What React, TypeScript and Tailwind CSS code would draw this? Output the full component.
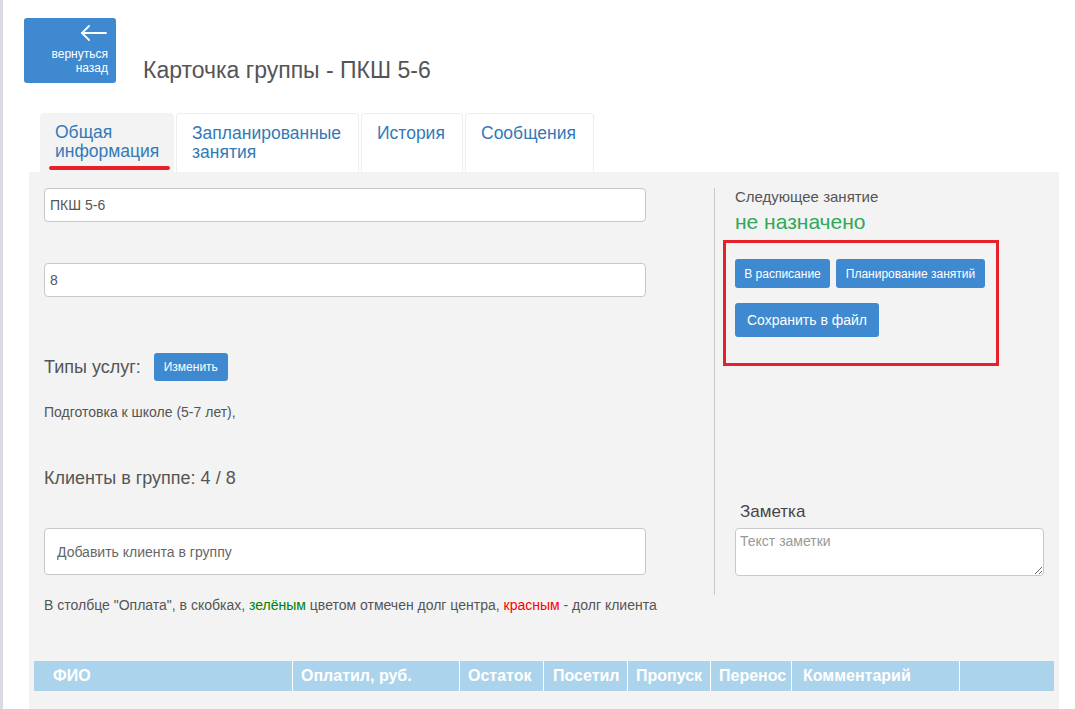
import React from 'react';

const TABS = [
  { label: ['Общая', 'информация'], w: 'w-[134px]', active: true },
  { label: ['Запланированные', 'занятия'], w: 'w-[183px]', active: false },
  { label: ['История'], w: 'w-[102px]', active: false },
  { label: ['Сообщения'], w: 'w-[129px]', active: false },
];

const COLUMNS = [
  { title: 'ФИО', w: 'w-[259px]', pl: 'pl-[19px]' },
  { title: 'Оплатил, руб.', w: 'w-[167px]', pl: 'pl-[8px]' },
  { title: 'Остаток', w: 'w-[84px]', pl: 'pl-[8px]' },
  { title: 'Посетил', w: 'w-[84px]', pl: 'pl-[9px]' },
  { title: 'Пропуск', w: 'w-[83px]', pl: 'pl-[8px]' },
  { title: 'Перенос', w: 'w-[81px]', pl: 'pl-[8px]' },
  { title: 'Комментарий', w: 'w-[168px]', pl: 'pl-[11px]' },
  { title: '', w: 'w-[94px]', pl: 'pl-[8px]' },
];

export default function App() {
  return (
    <div
      className="flex min-h-[709px] w-[1075px] bg-white text-[#555]"
      style={{ fontFamily: '"Liberation Sans", Arial, sans-serif' }}
    >
      {/* left strip */}
      <div className="w-[3px] shrink-0 bg-[#d9dae2]" />

      <div className="flex-1">
        {/* Header */}
        <div className="flex items-end pl-[21px] pt-[18px]">
          <button className="flex h-[65px] w-[92px] flex-col items-end rounded-[3px] bg-[#3e89d0] pr-[8px] pt-[7px] text-white">
            <svg width="28" height="16" viewBox="0 0 28 16" fill="none" stroke="white" strokeWidth="1.8" strokeLinecap="round">
              <path d="M2 8 H26" />
              <path d="M9 1 L2 8 L9 15" />
            </svg>
            <span className="mt-[6px] text-right text-[12px] leading-[14px]">
              вернуться
              <br />
              назад
            </span>
          </button>
          <h1 className="ml-[27px] text-[23px] leading-[26px] text-[#555]">Карточка группы - ПКШ 5-6</h1>
        </div>

        {/* Tabs */}
        <div className="mt-[30px] flex gap-[2px] pl-[37px]">
          {TABS.map((t, i) => (
            <div
              key={i}
              className={`relative h-[59px] ${t.w} rounded-t-[4px] px-[15px] pt-[10px] text-[17.5px] leading-[19px] text-[#337ab7] ${
                t.active ? 'bg-[#f3f3f3]' : 'border border-b-0 border-[#eee] bg-white'
              }`}
            >
              {t.label.map((l, j) => (
                <div key={j}>{l}</div>
              ))}
              {t.active && (
                <div className="absolute bottom-[2px] left-[9px] h-[4px] w-[121px] rounded-full bg-[#e8202a]" />
              )}
            </div>
          ))}
        </div>

        {/* Panel */}
        <div className="ml-[26px] w-[1030px] bg-[#f3f3f3] pb-[20px]">
          <div className="flex pl-[15px] pt-[16px]">
            {/* left column */}
            <div className="w-[602px]">
              <input
                readOnly
                value="ПКШ 5-6"
                className="h-[34px] w-full rounded-[4px] border border-[#c6c8cc] bg-white px-[5px] text-[14px] text-[#555] outline-none"
              />
              <input
                readOnly
                value="8"
                className="mt-[41px] h-[34px] w-full rounded-[4px] border border-[#c6c8cc] bg-white px-[5px] text-[14px] text-[#555] outline-none"
              />
              <div className="mt-[56px] flex h-[28px] items-center">
                <span className="text-[18px] leading-[24px] text-[#555]">Типы услуг:</span>
                <button className="ml-[13px] h-[28px] w-[74px] rounded-[3px] bg-[#3e89d0] text-[12px] text-white">
                  Изменить
                </button>
              </div>
              <div className="mt-[22px] text-[14px] leading-[18px]">Подготовка к школе (5-7 лет),</div>
              <div className="mt-[45px] text-[18px] leading-[24px]">Клиенты в группе: 4 / 8</div>
              <input
                readOnly
                placeholder="Добавить клиента в группу"
                className="mt-[38px] h-[47px] w-full rounded-[4px] border border-[#c6c8cc] bg-white px-[12px] text-[14px] text-[#555] outline-none placeholder:text-[#666]"
              />
              <div className="mt-[21px] whitespace-nowrap text-[14px] leading-[18px]">
                В столбце "Оплата", в скобках, <span className="text-[#008000]">зелёным</span> цветом отмечен долг центра,{' '}
                <span className="text-[#ff0000]">красным</span> - долг клиента
              </div>
            </div>

            {/* right column */}
            <div className="ml-[68px] h-[407px] w-[330px] border-l border-[#c8c8c8] pl-[8px]">
              <div className="ml-[12px] text-[15px] leading-[18px]">Следующее занятие</div>
              <div className="ml-[12px] mt-[4px] text-[21px] leading-[24px] text-[#2fa85a]">не назначено</div>
              <div className="mt-[6px] h-[126px] w-[276px] border-[3px] border-[#e8202a] pl-[9px] pt-[16px]">
                <div className="flex gap-[6px]">
                  <button className="h-[29px] w-[95px] rounded-[3px] bg-[#3e89d0] text-[12px] text-white">
                    В расписание
                  </button>
                  <button className="h-[29px] w-[149px] rounded-[3px] bg-[#3e89d0] text-[12px] text-white">
                    Планирование занятий
                  </button>
                </div>
                <button className="mt-[15px] h-[34px] w-[144px] rounded-[3px] bg-[#3e89d0] text-[14px] text-white">
                  Сохранить в файл
                </button>
              </div>
              <div className="ml-[17px] mt-[134px] text-[17px] leading-[24px] text-[#444]">Заметка</div>
              <textarea
                readOnly
                placeholder="Текст заметки"
                className="ml-[12px] mt-[4px] block h-[48px] w-[309px] rounded-[4px] border border-[#c6c8cc] bg-white px-[4px] py-[4px] text-[14px] leading-[16px] outline-none placeholder:text-[#999]"
              />
            </div>
          </div>

          {/* table header */}
          <div className="ml-[5px] mt-[47px] flex h-[30px] w-[1020px] bg-[#acd3ec]">
            {COLUMNS.map((c, i) => (
              <div
                key={i}
                className={`${c.w} ${c.pl} flex items-center whitespace-nowrap text-[16px] font-bold text-white ${
                  i < COLUMNS.length - 1 ? 'border-r border-white' : ''
                }`}
              >
                {c.title}
              </div>
            ))}
          </div>
        </div>
      </div>
    </div>
  );
}
